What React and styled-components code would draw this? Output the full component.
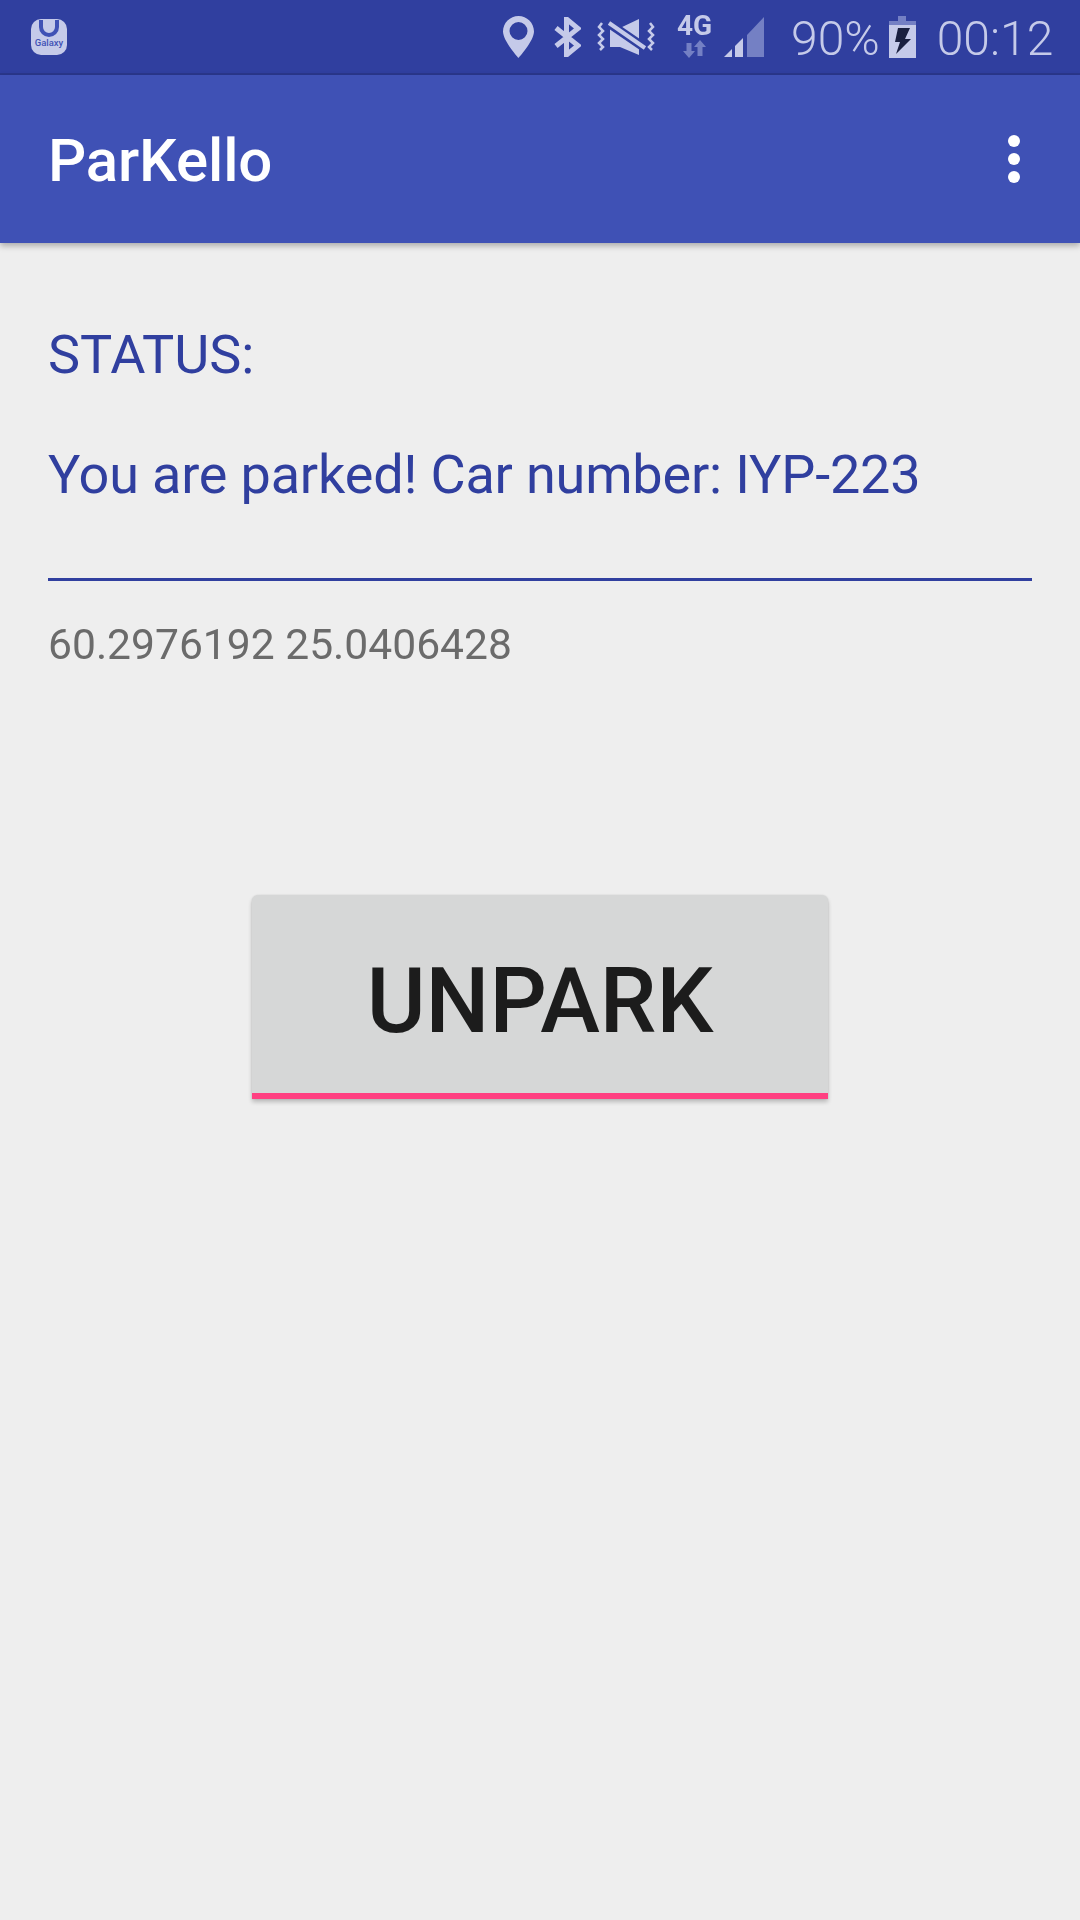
import React from "react"
import styled, { createGlobalStyle } from "styled-components"

const GlobalStyle = createGlobalStyle`
  html, body {
    margin: 0;
    padding: 0;
    background: #eeeeee;
  }
  * {
    box-sizing: border-box;
  }
`

const Screen = styled.div`
  width: 1080px;
  height: 1920px;
  overflow: hidden;
  background: #eeeeee;
  font-family: Roboto, "Liberation Sans", sans-serif;
`

const StatusBar = styled.div`
  height: 75px;
  padding: 0 27px 0 31px;
  display: flex;
  align-items: center;
  justify-content: space-between;
  background: #303f9f;
  border-bottom: 2px solid #2a378c;
`

const StatusIcons = styled.div`
  display: flex;
  align-items: center;
  color: #c5cae9;
  will-change: transform;
`

const IconSlot = styled.span`
  display: flex;
  margin-left: ${props => props.$gap}px;
`

const StatusText = styled.span`
  margin-left: ${props => props.$gap}px;
  padding-top: 5px;
  font-size: 48px;
  font-weight: 300;
  line-height: 68px;
  color: #c5cae9;
`

const NetworkGroup = styled.span`
  width: 33px;
  margin-left: ${props => props.$gap}px;
  display: flex;
  flex-direction: column;
  align-items: center;
  gap: 4px;
`

const NetworkLabel = styled.span`
  font-size: 28px;
  font-weight: 700;
  line-height: 21px;
  white-space: nowrap;
  color: #c5cae9;
`

const AppBar = styled.header`
  position: relative;
  height: 168px;
  padding: 0 60px 0 48px;
  display: flex;
  align-items: center;
  justify-content: space-between;
  background: #3f51b5;
  box-shadow: 0 3px 6px rgba(0, 0, 0, 0.28);
`

const AppTitle = styled.h1`
  margin: 0;
  padding-top: 3px;
  font-size: 60px;
  font-weight: 500;
  letter-spacing: -0.15px;
  color: #ffffff;
  will-change: transform;
`

const MenuButton = styled.div`
  display: flex;
  flex-direction: column;
  gap: 6px;
`

const MenuDot = styled.span`
  width: 12px;
  height: 12px;
  border-radius: 50%;
  background: #ffffff;
`

const Content = styled.main`
  padding: 80px 48px 0;
  will-change: transform;
`

const StatusLabel = styled.div`
  font-size: 54px;
  line-height: 63px;
  color: #303f9f;
`

const StatusMessage = styled.div`
  margin-top: 57px;
  padding-bottom: 72px;
  font-size: 54px;
  line-height: 63px;
  letter-spacing: -0.17px;
  color: #303f9f;
  border-bottom: 3px solid #303f9f;
`

const Coordinates = styled.div`
  margin-top: 37px;
  font-size: 42.6px;
  line-height: 53px;
  color: #6b6b6b;
`

const ButtonRow = styled.div`
  margin-top: 224px;
  display: flex;
  justify-content: center;
`

const UnparkButton = styled.button`
  width: 576px;
  height: 204px;
  padding: 15px 0 0;
  border: 0;
  border-bottom: 6px solid #ff4081;
  border-radius: 6px 6px 0 0;
  background: #d6d7d7;
  box-shadow: 0 3px 4px rgba(0, 0, 0, 0.22), 0 0 2px rgba(0, 0, 0, 0.12);
  font-family: inherit;
  font-size: 90px;
  font-weight: 500;
  color: #1c1c1c;
`

const GalaxyIcon = () => (
  <svg width="36" height="36" viewBox="0 0 36 36">
    <rect width="36" height="36" rx="10" fill="#c5cae9" />
    <path d="M8 1v7a10 10 0 0 0 20 0V1h-4v7a6 6 0 0 1-12 0V1z" fill="#3f51b5" />
    <text x="18" y="27" textAnchor="middle" fontSize="9.500" fontWeight="500" fill="#3f51b5" fontFamily="Roboto, sans-serif">
      Galaxy
    </text>
  </svg>
)

const PinIcon = () => (
  <svg width="31" height="42" viewBox="0 0 31 42">
    <path
      fillRule="evenodd"
      d="M15.5 0C7 0 0 7 0 15.500 0 25 15.500 42 15.500 42S31 25 31 15.500C31 7 24 0 15.500 0zm0 6a9 9 0 1 1 0 18 9 9 0 0 1 0-18z"
      fill="currentColor"
    />
  </svg>
)

const BluetoothIcon = () => (
  <svg width="27" height="40" viewBox="0 0 27 40">
    <path
      d="M2 11L24 28.500L12.500 38V2L24 11.500L2 29"
      fill="none"
      stroke="currentColor"
      strokeWidth="5"
    />
  </svg>
)

const VibrateMuteIcon = () => (
  <svg width="58" height="36" viewBox="0 0 58 36">
    <path d="M13 9h10L42 0v36l-19-8H13z" fill="currentColor" />
    <path d="M10 3l38 26" stroke="#303f9f" strokeWidth="9" />
    <path d="M12 4l36 25" stroke="currentColor" strokeWidth="4" />
    <path
      d="M5 4L2 8l4 4-4 4 4 4-4 4 4 4-3 3M53 4l3 4-4 4 4 4-4 4 4 4-4 4 3 3"
      fill="none"
      stroke="currentColor"
      strokeWidth="2.500"
    />
  </svg>
)

const NetworkArrows = () => (
  <svg width="23" height="18" viewBox="0 0 23 18">
    <path d="M6 18L0 11h3.500V3h5v8H12zM17 0l6 7h-3.500v9h-5V7H11z" fill="#7480c4" />
  </svg>
)

const SignalIcon = () => (
  <svg width="40" height="40" viewBox="0 0 40 40">
    <path d="M0 40l8-8v8zM11 29l8-8v19h-8z" fill="currentColor" />
    <path d="M23 18L40 0v40H23z" fill="#7480c4" />
  </svg>
)

const BatteryIcon = () => (
  <svg width="27" height="42" viewBox="0 0 27 42">
    <path d="M9 0h8v5h10v4H0V5h9z" fill="#7480c4" />
    <rect y="9" width="27" height="33" fill="currentColor" />
    <path d="M9 12h12l-5 11h6L7 38l4-12H6z" fill="#1a2040" />
  </svg>
)

const App = () => {
  return (
    <Screen>
      <GlobalStyle />
      <StatusBar>
        <GalaxyIcon />
        <StatusIcons>
          <IconSlot $gap={0}>
            <PinIcon />
          </IconSlot>
          <IconSlot $gap={20}>
            <BluetoothIcon />
          </IconSlot>
          <IconSlot $gap={16}>
            <VibrateMuteIcon />
          </IconSlot>
          <NetworkGroup $gap={23}>
            <NetworkLabel>4G</NetworkLabel>
            <NetworkArrows />
          </NetworkGroup>
          <IconSlot $gap={13}>
            <SignalIcon />
          </IconSlot>
          <StatusText $gap={27}>90%</StatusText>
          <IconSlot $gap={9}>
            <BatteryIcon />
          </IconSlot>
          <StatusText $gap={21}>00:12</StatusText>
        </StatusIcons>
      </StatusBar>
      <AppBar>
        <AppTitle>ParKello</AppTitle>
        <MenuButton>
          <MenuDot />
          <MenuDot />
          <MenuDot />
        </MenuButton>
      </AppBar>
      <Content>
        <StatusLabel>STATUS:</StatusLabel>
        <StatusMessage>You are parked! Car number: IYP-223</StatusMessage>
        <Coordinates>60.2976192 25.0406428</Coordinates>
        <ButtonRow>
          <UnparkButton>UNPARK</UnparkButton>
        </ButtonRow>
      </Content>
    </Screen>
  )
}

export default App
